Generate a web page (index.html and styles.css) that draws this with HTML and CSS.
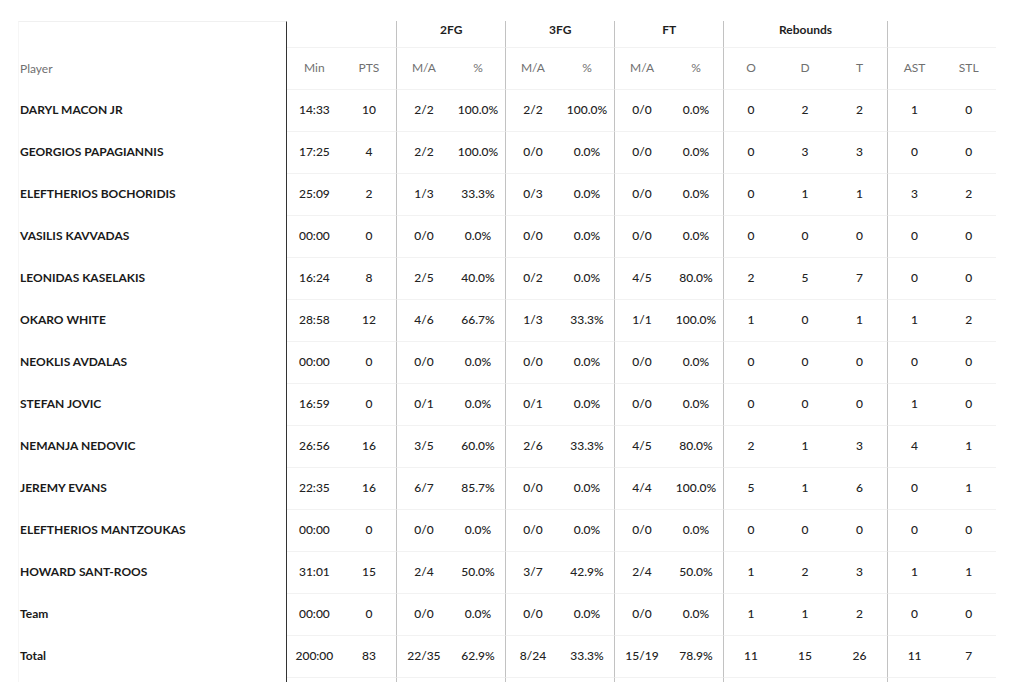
FILE: index.html
```html
<!DOCTYPE html>
<html>
<head>
<meta charset="utf-8">
<link rel="stylesheet" href="styles.css">
</head>
<body>
<div class="wrap">
<table class="box">
<colgroup>
<col class="c-player">
<col span="13" class="c-stat">
</colgroup>
<thead>
<tr class="group">
<th class="player head" rowspan="2">Player</th>
<th colspan="2"></th>
<th colspan="2" class="sep">2FG</th>
<th colspan="2" class="sep">3FG</th>
<th colspan="2" class="sep">FT</th>
<th colspan="3" class="sep">Rebounds</th>
<th colspan="2" class="sep"></th>
</tr>
<tr class="sub">
<th>Min</th><th>PTS</th>
<th class="sep">M/A</th><th>%</th>
<th class="sep">M/A</th><th>%</th>
<th class="sep">M/A</th><th>%</th>
<th class="sep">O</th><th>D</th><th>T</th>
<th class="sep">AST</th><th>STL</th>
</tr>
</thead>
<tbody>
<tr><td class="player">DARYL MACON JR</td><td>14:33</td><td>10</td><td class="sep">2/2</td><td>100.0%</td><td class="sep">2/2</td><td>100.0%</td><td class="sep">0/0</td><td>0.0%</td><td class="sep">0</td><td>2</td><td>2</td><td class="sep">1</td><td>0</td></tr>
<tr><td class="player">GEORGIOS PAPAGIANNIS</td><td>17:25</td><td>4</td><td class="sep">2/2</td><td>100.0%</td><td class="sep">0/0</td><td>0.0%</td><td class="sep">0/0</td><td>0.0%</td><td class="sep">0</td><td>3</td><td>3</td><td class="sep">0</td><td>0</td></tr>
<tr><td class="player">ELEFTHERIOS BOCHORIDIS</td><td>25:09</td><td>2</td><td class="sep">1/3</td><td>33.3%</td><td class="sep">0/3</td><td>0.0%</td><td class="sep">0/0</td><td>0.0%</td><td class="sep">0</td><td>1</td><td>1</td><td class="sep">3</td><td>2</td></tr>
<tr><td class="player">VASILIS KAVVADAS</td><td>00:00</td><td>0</td><td class="sep">0/0</td><td>0.0%</td><td class="sep">0/0</td><td>0.0%</td><td class="sep">0/0</td><td>0.0%</td><td class="sep">0</td><td>0</td><td>0</td><td class="sep">0</td><td>0</td></tr>
<tr><td class="player">LEONIDAS KASELAKIS</td><td>16:24</td><td>8</td><td class="sep">2/5</td><td>40.0%</td><td class="sep">0/2</td><td>0.0%</td><td class="sep">4/5</td><td>80.0%</td><td class="sep">2</td><td>5</td><td>7</td><td class="sep">0</td><td>0</td></tr>
<tr><td class="player">OKARO WHITE</td><td>28:58</td><td>12</td><td class="sep">4/6</td><td>66.7%</td><td class="sep">1/3</td><td>33.3%</td><td class="sep">1/1</td><td>100.0%</td><td class="sep">1</td><td>0</td><td>1</td><td class="sep">1</td><td>2</td></tr>
<tr><td class="player">NEOKLIS AVDALAS</td><td>00:00</td><td>0</td><td class="sep">0/0</td><td>0.0%</td><td class="sep">0/0</td><td>0.0%</td><td class="sep">0/0</td><td>0.0%</td><td class="sep">0</td><td>0</td><td>0</td><td class="sep">0</td><td>0</td></tr>
<tr><td class="player">STEFAN JOVIC</td><td>16:59</td><td>0</td><td class="sep">0/1</td><td>0.0%</td><td class="sep">0/1</td><td>0.0%</td><td class="sep">0/0</td><td>0.0%</td><td class="sep">0</td><td>0</td><td>0</td><td class="sep">1</td><td>0</td></tr>
<tr><td class="player">NEMANJA NEDOVIC</td><td>26:56</td><td>16</td><td class="sep">3/5</td><td>60.0%</td><td class="sep">2/6</td><td>33.3%</td><td class="sep">4/5</td><td>80.0%</td><td class="sep">2</td><td>1</td><td>3</td><td class="sep">4</td><td>1</td></tr>
<tr><td class="player">JEREMY EVANS</td><td>22:35</td><td>16</td><td class="sep">6/7</td><td>85.7%</td><td class="sep">0/0</td><td>0.0%</td><td class="sep">4/4</td><td>100.0%</td><td class="sep">5</td><td>1</td><td>6</td><td class="sep">0</td><td>1</td></tr>
<tr><td class="player">ELEFTHERIOS MANTZOUKAS</td><td>00:00</td><td>0</td><td class="sep">0/0</td><td>0.0%</td><td class="sep">0/0</td><td>0.0%</td><td class="sep">0/0</td><td>0.0%</td><td class="sep">0</td><td>0</td><td>0</td><td class="sep">0</td><td>0</td></tr>
<tr><td class="player">HOWARD SANT-ROOS</td><td>31:01</td><td>15</td><td class="sep">2/4</td><td>50.0%</td><td class="sep">3/7</td><td>42.9%</td><td class="sep">2/4</td><td>50.0%</td><td class="sep">1</td><td>2</td><td>3</td><td class="sep">1</td><td>1</td></tr>
<tr><td class="player">Team</td><td>00:00</td><td>0</td><td class="sep">0/0</td><td>0.0%</td><td class="sep">0/0</td><td>0.0%</td><td class="sep">0/0</td><td>0.0%</td><td class="sep">1</td><td>1</td><td>2</td><td class="sep">0</td><td>0</td></tr>
<tr><td class="player">Total</td><td>200:00</td><td>83</td><td class="sep">22/35</td><td>62.9%</td><td class="sep">8/24</td><td>33.3%</td><td class="sep">15/19</td><td>78.9%</td><td class="sep">11</td><td>15</td><td>26</td><td class="sep">11</td><td>7</td></tr>
<tr class="blank"><td class="player"></td><td></td><td></td><td class="sep"></td><td></td><td class="sep"></td><td></td><td class="sep"></td><td></td><td class="sep"></td><td></td><td></td><td class="sep"></td><td></td></tr>
</tbody>
</table>
</div>
</body>
</html>
```

FILE: styles.css
```css
html, body {
  margin: 0;
  padding: 0;
  background: #ffffff;
}

body {
  font-family: Lato, "Liberation Sans", sans-serif;
  font-size: 12px;
  color: #222222;
}

.wrap {
  padding: 21px 0 0 18px;
}

.box {
  table-layout: fixed;
  border-collapse: separate;
  border-spacing: 0;
  width: 978px;
}

.c-player {
  width: 269px;
}

.c-stat {
  width: 54.5px;
}

th, td {
  padding: 0;
  text-align: center;
  white-space: nowrap;
  line-height: 15px;
}

.group th {
  height: 22px;
  padding-top: 1px;
  padding-bottom: 3px;
  font-weight: 700;
  color: #1e1e1e;
  border-bottom: 1px solid #f2f2f2;
  vertical-align: top;
}

.sub th {
  height: 39px;
  padding-bottom: 2px;
  font-weight: 400;
  color: #707070;
  border-bottom: 1px solid #f2f2f2;
}

td {
  height: 38px;
  padding-bottom: 3px;
  border-bottom: 1px solid #f2f2f2;
  font-weight: 500;
  color: #222222;
}

.sep {
  border-left: 1px solid #c2c2c2;
}

.player {
  text-align: left;
  padding-left: 1px;
  border-right: 1px solid #333333;
  border-bottom: none;
  border-left: 1px solid #f6f6f6;
  font-weight: 700;
  color: #1a1a1a;
}

th.player.head {
  font-weight: 400;
  color: #707070;
  padding-top: 26px;
  padding-bottom: 2px;
  vertical-align: middle;
  border-top: 1px solid #f0f0f0;
  border-bottom: none;
}

.blank td {
  height: 20px;
  padding-bottom: 0;
}
```
